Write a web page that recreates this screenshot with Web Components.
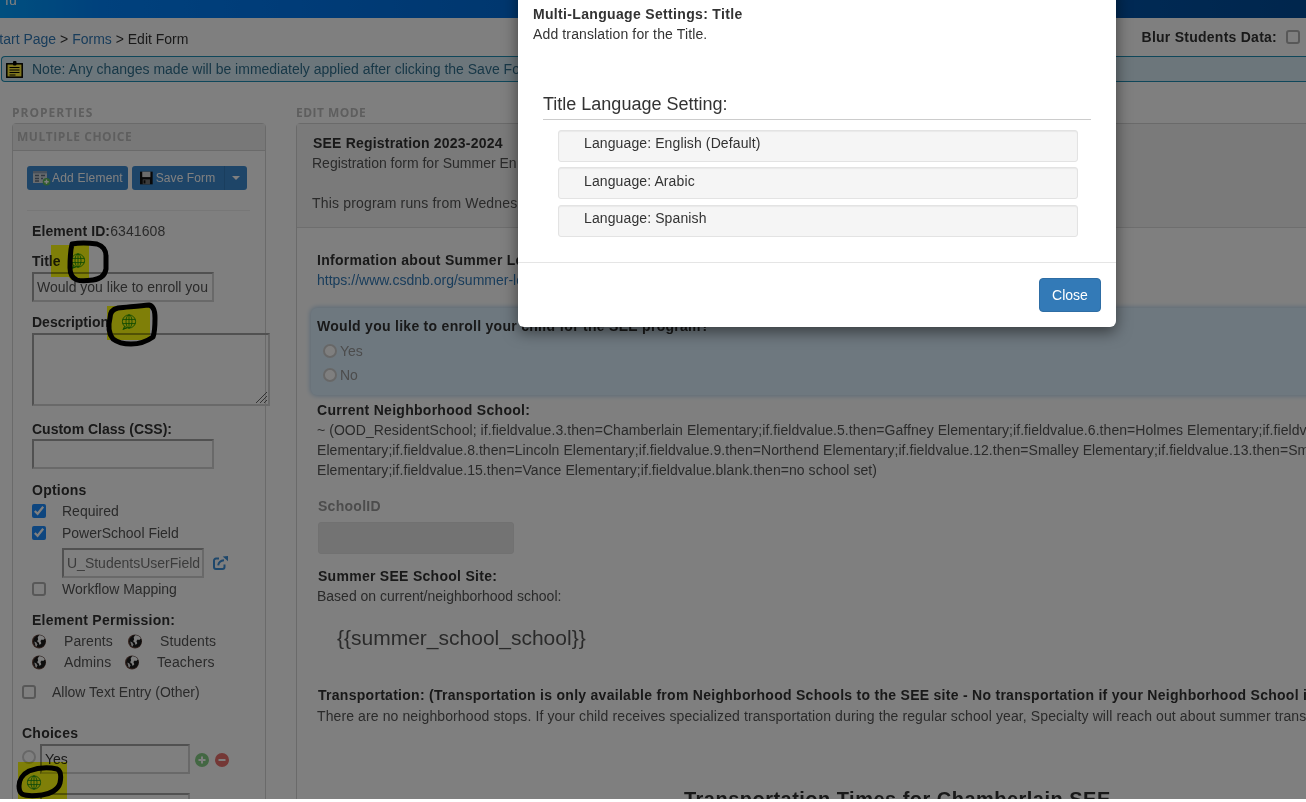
<!DOCTYPE html>
<html>
<head>
<meta charset="utf-8">
<title>Edit Form</title>
<style>
    html, body { margin: 0; padding: 0; background: #fff; height: 100%; overflow: hidden; }
    body { font: 14px/20px "Liberation Sans", Arial, sans-serif; color: #333; }
</style>
</head>
<body>
<page-frame></page-frame>

<script>
const icons = {
    globe: `<svg width="16" height="16" viewBox="0 0 16 16" fill="none" stroke="#149014" stroke-width=".85">
        <circle cx="8" cy="7.5" r="6.6"/><ellipse cx="8" cy="7.5" rx="3" ry="6.6"/>
        <path d="M1.700 5.400h12.600M1.700 9.600h12.600M8 .9v13.200"/><path d="M3.600 12.400L2.400 15.200l3.600-1.400" stroke-width="1.100"/></svg>`,
    world: `<svg width="14" height="15" viewBox="0 0 14 15">
        <circle cx="7" cy="7.500" r="7" fill="#6b4a40"/><circle cx="7.400" cy="7.300" r="6.200" fill="#1c1c1c"/>
        <path d="M7 1.400c2.600-.3 5 1.100 5.800 3.200l-1.600 1.400-1.500-.6-1.300 1.600.9 2.300-1.600 1.800-1-2.700-1.600-1.100 1-1.700L5.700 3.200z" fill="#fff"/>
        <path d="M2.300 7.600l1.900.6 1.100 2.100-.6 2.400-1.400-1.500z" fill="#ddd"/></svg>`,
    note: `<svg width="17" height="17" viewBox="0 0 17 17">
        <rect x=".8" y="2.800" width="15.400" height="13.400" fill="#ffec3d" stroke="#000" stroke-width="1.500"/>
        <path d="M3.500 6.500h10M3.500 9h10M3.500 11.500h10M3.500 14h6" stroke="#000"/><rect x="7" y="0" width="3.500" height="4.500" rx="1" fill="#000"/></svg>`,
    add: `<svg width="18" height="16" viewBox="0 0 18 16">
        <rect x="0" y="1" width="14" height="12" fill="#cfd6dd"/><rect x="0" y="1" width="14" height="2.400" fill="#8ea0b4"/>
        <path d="M2 5.500h4M8 5.500h4M2 8.500h4M8 8.500h2M2 11h4" stroke="#5f6f80" stroke-width="1.400"/>
        <circle cx="13.500" cy="11.800" r="3.800" fill="#5cb85c"/><path d="M13.500 9.600v4.400M11.300 11.800h4.400" stroke="#fff" stroke-width="1.400"/></svg>`,
    save: `<svg width="14" height="14" viewBox="0 0 14 14">
        <path d="M0 0h14v14H0z" fill="#111"/><rect x="2.500" y="0" width="9" height="6" fill="#d8d8d8"/>
        <rect x="3" y="8.500" width="8" height="5.500" fill="#777"/><rect x="4" y="9.500" width="2" height="3.500" fill="#111"/></svg>`,
    open: `<svg width="15" height="14" viewBox="0 0 15 14" fill="none" stroke="#3d8fd6">
        <path d="M6 2.600H3a2 2 0 0 0-2 2V11a2 2 0 0 0 2 2h6.500a2 2 0 0 0 2-2V8.400" stroke-width="2"/>
        <path d="M5.200 9.400c.5-3.400 2.800-5 5.800-5.200" stroke-width="2"/><path d="M9.700 .6L15 0v5.200z" fill="#3d8fd6" stroke="none"/></svg>`,
    plus: `<svg width="14" height="14" viewBox="0 0 14 14"><circle cx="7" cy="7" r="7" fill="#86cf86"/><path d="M7 3.500v7M3.500 7h7" stroke="#fff" stroke-width="2"/></svg>`,
    minus: `<svg width="14" height="14" viewBox="0 0 14 14"><circle cx="7" cy="7" r="7" fill="#e8706c"/><path d="M3.500 7h7" stroke="#fff" stroke-width="2"/></svg>`
};

// shared look of the unchecked boxes and the radios
const inputCss = `
    input[type=radio] { appearance: none; box-sizing: border-box; width: 14px; height: 14px; border: 2px solid #cfcfcf; border-radius: 50%; background: #fff; }
    input[type=checkbox]:not([checked]) { appearance: none; box-sizing: border-box; width: 14px; height: 14px; border: 2px solid #b0b0b0; border-radius: 3px; background: #fff; }
`;

class TopBar extends HTMLElement {
    constructor() {
        super();
        this.attachShadow({mode: 'open'});
        this.shadowRoot.innerHTML = `
            <style>
                :host {
                    display: block;
                    height: 18px;
                    overflow: hidden;
                    background: linear-gradient(90deg, #009fff 0%, #0082fa 8%, #0078f0 23%, #0054aa 85%, #004c9a 100%);
                }
                span { display: block; margin: -10px 0 0 5px; color: #fff; font-size: 14px; }
            </style>
            <span>fu</span>
        `;
    }
}

class CrumbBar extends HTMLElement {
    constructor() {
        super();
        this.attachShadow({mode: 'open'});
        this.shadowRoot.innerHTML = `
            <style>
                ${inputCss}
                :host {
                    display: flex;
                    justify-content: space-between;
                    height: 38px;
                    box-sizing: border-box;
                    padding: 11px 6px 0 0;
                }
                a { color: #337ab7; text-decoration: none; }
                .trail { margin-left: -10px; }
                .blur { display: flex; align-items: flex-start; gap: 9px; margin-top: -2px; font-weight: bold; letter-spacing: .25px; }
                input { margin: 3px 0 0; }
            </style>
            <div class="trail"><a>Start Page</a> &gt; <a>Forms</a> &gt; Edit Form</div>
            <div class="blur">Blur Students Data: <input type="checkbox"></div>
        `;
    }
}

class NoteBar extends HTMLElement {
    constructor() {
        super();
        this.attachShadow({mode: 'open'});
        this.shadowRoot.innerHTML = `
            <style>
                :host {
                    display: flex;
                    align-items: center;
                    gap: 9px;
                    height: 24px;
                    margin-left: 1px;
                    padding-left: 4px;
                    border: 1px solid #1f8fb5;
                    border-right: 0;
                    border-radius: 4px 0 0 4px;
                    background: #d9edf7;
                    color: #31708f;
                    white-space: nowrap;
                }
                svg { display: block; }
            </style>
            ${icons.note}<span>Note: Any changes made will be immediately applied after clicking the Save Form</span>
        `;
    }
}

class FieldBox extends HTMLElement {
    constructor() {
        super();
        this.attachShadow({mode: 'open'});
        this.shadowRoot.innerHTML = `
            <style>
                :host {
                    display: block;
                    box-sizing: border-box;
                    height: 30px;
                    padding: 3px 3px;
                    line-height: 20px;
                    border: 2px solid;
                    border-color: #a2a2a2 #d2d2d2 #d2d2d2 #a2a2a2;
                    background: #fff;
                    overflow: hidden;
                    white-space: nowrap;
                    color: #555;
                }
            </style>
            <slot></slot>
        `;
    }
}

class TickRow extends HTMLElement {
    constructor() {
        super();
        this.attachShadow({mode: 'open'});
        const checked = this.hasAttribute('checked') ? 'checked' : '';
        this.shadowRoot.innerHTML = `
            <style>
                ${inputCss}
                :host { display: flex; align-items: center; gap: 16px; height: 20px; color: #555; }
                input { width: 14px; height: 14px; margin: 0; accent-color: #1c8cff; }
            </style>
            <input type="checkbox" ${checked}>
            <slot></slot>
        `;
    }
}

class PropsPanel extends HTMLElement {
    constructor() {
        super();
        this.attachShadow({mode: 'open'});
        this.shadowRoot.innerHTML = `
            <style>
                ${inputCss}
                :host {
                    display: block;
                    box-sizing: border-box;
                    width: 254px;
                    height: 700px;
                    border: 1px solid #d4d4d4;
                    border-radius: 4px 4px 0 0;
                    background: #fff;
                }
                header {
                    height: 26px;
                    padding-left: 4px;
                    border-bottom: 1px solid #d4d4d4;
                    background: #f1f1f1;
                    font: bold 12px/26px "Open Sans", sans-serif;
                    letter-spacing: .55px;
                    color: #bdbdbd;
                }
                .body { padding: 15px 0 0 14px; }
                .buttons { display: flex; gap: 4px; }
                .btn {
                    display: flex;
                    align-items: center;
                    height: 24px;
                    box-sizing: border-box;
                    border-radius: 3px;
                    background: #3c8ad0;
                    color: #fff;
                    font-size: 12px;
                    letter-spacing: .2px;
                    white-space: nowrap;
                }
                .btn svg { display: block; }
                .btn.add { width: 101px; gap: 1px; padding-left: 6px; }
                .btn.save { width: 115px; gap: 3px; padding-left: 8px; letter-spacing: .1px; }
                .caret { display: flex; align-items: center; justify-content: center; width: 25px; height: 24px; margin-left: 6px; border-left: 1px solid #347cbd; box-sizing: border-box; }
                .caret i { border: 4px solid transparent; border-top-color: #fff; border-bottom: 0; }
                hr { width: 223px; margin: 20px 0 0 0; border: 0; border-top: 1px solid #eee; }
                .col { margin: 10px 0 0 5px; }
                .lbl { display: block; font-weight: bold; line-height: 20px; }
                .id { color: #555; font-weight: normal; letter-spacing: .1px; }
                .inline { display: flex; align-items: center; }
                .inline svg { display: block; }
                field-box.w { width: 182px; margin-top: 1px; }
                .area { width: 238px; height: 73px; box-sizing: border-box; margin-top: 1px; border: 2px solid; border-color: #a2a2a2 #d2d2d2 #d2d2d2 #a2a2a2; position: relative; }
                .area svg { position: absolute; right: 0; bottom: 0; }
                .link { display: flex; align-items: center; gap: 9px; margin: 5px 0 1px 30px; }
                field-box.ps { width: 142px; color: #777; font-size: 14px; padding-right: 0; }
                .perm { display: grid; grid-template-columns: 14px 46px 14px auto; column-gap: 18px; align-items: center; height: 20px; margin-top: 1px; color: #555; }
                .perm.second { grid-template-columns: 14px 43px 14px auto; }
                .perm svg { display: block; }
                .perm span { letter-spacing: .1px; }
                .out { margin-left: -10px; }
                .choice { display: flex; align-items: flex-start; gap: 4px; margin-left: -10px; }
                .choice input { margin: 6px 0 0; flex: none; }
                .choice field-box { width: 150px; color: #333; }
                .tools { display: flex; gap: 6px; margin: 9px 0 0 1px; }
                .tools svg { display: block; }
                .spaced { letter-spacing: .25px; }
                .id-name { letter-spacing: .1px; }
            </style>
            <header>MULTIPLE CHOICE</header>
            <div class="body">
                <div class="buttons">
                    <div class="btn add">${icons.add}Add Element</div>
                    <div class="btn save">${icons.save}Save Form<span class="caret"><i></i></span></div>
                </div>
                <hr>
                <div class="col">
                    <div><strong class="id-name">Element ID:</strong><span class="id">6341608</span></div>
                    <div class="lbl inline" style="margin-top:10px;gap:9px">Title ${icons.globe}</div>
                    <field-box class="w">Would you like to enroll you</field-box>
                    <div class="lbl inline" style="margin-top:10px;gap:12px">Description ${icons.globe}</div>
                    <div class="area"><svg width="14" height="14" viewBox="0 0 14 14" stroke="#666"><path d="M2 13L13 2M6 13l7-7M10 13l3-3"/></svg></div>
                    <div class="lbl" style="margin-top:13px">Custom Class (CSS):</div>
                    <field-box class="w" style="margin-top:0"></field-box>
                    <div class="lbl spaced" style="margin-top:11px">Options</div>
                    <tick-row checked style="margin-top:1px">Required</tick-row>
                    <tick-row checked style="margin-top:2px">PowerSchool Field</tick-row>
                    <div class="link"><field-box class="ps">U_StudentsUserField</field-box>${icons.open}</div>
                    <tick-row>Workflow Mapping</tick-row>
                    <div class="lbl spaced" style="margin-top:11px">Element Permission:</div>
                    <div class="perm">${icons.world}<span>Parents</span>${icons.world}<span>Students</span></div>
                    <div class="perm second">${icons.world}<span>Admins</span>${icons.world}<span>Teachers</span></div>
                    <tick-row class="out" style="margin-top:10px">Allow Text Entry (Other)</tick-row>
                    <div class="lbl out spaced" style="margin-top:21px">Choices</div>
                    <div class="choice" style="margin-top:1px"><input type="radio"><field-box>Yes</field-box><div class="tools">${icons.plus}${icons.minus}</div></div>
                    <div class="choice" style="margin-top:19px"><input type="radio"><field-box></field-box></div>
                </div>
            </div>
        `;
    }
}

class RadioList extends HTMLElement {
    constructor() {
        super();
        this.attachShadow({mode: 'open'});
        this.shadowRoot.innerHTML = `
            <style>
                ${inputCss}
                :host { display: block; margin: 5px 0 0 6px; color: #999; }
                div { display: flex; align-items: center; gap: 3px; height: 20px; margin-bottom: 4px; }
                input { margin: 0; background: transparent; }
            </style>
            <div><input type="radio">Yes</div>
            <div><input type="radio">No</div>
        `;
    }
}

class FormCanvas extends HTMLElement {
    constructor() {
        super();
        this.attachShadow({mode: 'open'});
        this.shadowRoot.innerHTML = `
            <style>
                :host {
                    display: block;
                    box-sizing: border-box;
                    width: 1100px;
                    height: 700px;
                    border: 1px solid #d4d4d4;
                    border-radius: 4px 4px 0 0;
                    background: #fff;
                    white-space: nowrap;
                    color: #555;
                }
                header {
                    height: 104px;
                    box-sizing: border-box;
                    padding: 9px 0 0 15px;
                    border-bottom: 1px solid #ddd;
                    background: #f5f5f5;
                }
                b { display: block; color: #333; letter-spacing: .28px; }
                header b { margin-left: 1px; letter-spacing: .2px; }
                .wide { letter-spacing: .17px; }
                .body { padding: 22px 0 0 20px; }
                a { color: #337ab7; }
                .focus {
                    margin: 18px 0 0 -6px;
                    height: 87px;
                    box-sizing: border-box;
                    padding: 8px 6px;
                    border-radius: 6px;
                    background: #dcf0ff;
                    box-shadow: 0 0 5px 1px #b4d4ee;
                }
                .gap5 { margin-top: 5px; }
                .lines { letter-spacing: .06px; }
                .muted { color: #999; margin: 16px 0 0 1px; }
                .off { width: 196px; height: 32px; margin: 6px 0 0 1px; border-radius: 3px; background: #e7e7e7; border: 1px solid #e2e2e2; box-sizing: border-box; }
                .site { margin: 18px 0 0 20px; font-size: 21px; line-height: 28px; }
                .stops { margin-top: 1px; letter-spacing: .11px; }
                h2 { margin: 61px 0 0; padding-left: 367px; font-size: 20px; line-height: 24px; color: #333; letter-spacing: .48px; }
            </style>
            <header>
                <b>SEE Registration 2023-2024</b>
                Registration form for Summer En<br><br>
                <span class="wide">This program runs from Wednes</span>
            </header>
            <div class="body">
                <b>Information about Summer Le</b>
                <a>https://www.csdnb.org/summer-le</a>
                <div class="focus">
                    <b>Would you like to enroll your child for the SEE program?</b>
                    <radio-list></radio-list>
                </div>
                <b class="gap5">Current Neighborhood School:</b>
                <div class="lines">
                ~ (OOD_ResidentSchool; if.fieldvalue.3.then=Chamberlain Elementary;if.fieldvalue.5.then=Gaffney Elementary;if.fieldvalue.6.then=Holmes Elementary;if.fieldv<br>
                Elementary;if.fieldvalue.8.then=Lincoln Elementary;if.fieldvalue.9.then=Northend Elementary;if.fieldvalue.12.then=Smalley Elementary;if.fieldvalue.13.then=Sm<br>
                Elementary;if.fieldvalue.15.then=Vance Elementary;if.fieldvalue.blank.then=no school set)
                </div>
                <b class="muted">SchoolID</b>
                <div class="off"></div>
                <b style="margin:12px 0 0 1px">Summer SEE School Site:</b>
                Based on current/neighborhood school:
                <div class="site">{{summer_school_school}}</div>
                <b style="margin-top:33px;margin-left:1px">Transportation: (Transportation is only available from Neighborhood Schools to the SEE site - No transportation if your Neighborhood School i</b>
                <div class="stops">There are no neighborhood stops. If your child receives specialized transportation during the regular school year, Specialty will reach out about summer trans</div>
                <h2>Transportation Times for Chamberlain SEE</h2>
            </div>
        `;
    }
}

class WorkArea extends HTMLElement {
    constructor() {
        super();
        this.attachShadow({mode: 'open'});
        this.shadowRoot.innerHTML = `
            <style>
                :host {
                    display: grid;
                    grid-template-columns: 254px auto;
                    column-gap: 30px;
                    margin-top: 19px;
                    padding-left: 12px;
                }
                h4 {
                    margin: 0;
                    height: 22px;
                    font: bold 12px/24px "Open Sans", sans-serif;
                    letter-spacing: 1px;
                    color: #bdbdbd;
                }
                h4.edit { letter-spacing: .45px; }
            </style>
            <section><h4>PROPERTIES</h4><props-panel></props-panel></section>
            <section><h4 class="edit">EDIT MODE</h4><form-canvas></form-canvas></section>
        `;
    }
}

// highlighter patches and pen scribbles someone drew over the screenshot
class InkLayer extends HTMLElement {
    constructor() {
        super();
        this.attachShadow({mode: 'open'});
        this.shadowRoot.innerHTML = `
            <style>
                :host { position: absolute; inset: 0; pointer-events: none; }
                svg { display: block; position: absolute; left: 0; top: 0; }
                .pen { fill: none; stroke: #000; stroke-width: 5; stroke-linecap: round; stroke-linejoin: round; }
                .yel { fill: #ffff10; mix-blend-mode: multiply; }
            </style>
            <svg width="1306" height="802">
                <path class="yel" d="M51 245h38v35H71l-2-3H51z"/>
                <path class="yel" d="M107 306h43v34h-43z"/>
                <path class="yel" d="M18 762h49v40H18z"/>
            </svg>
            <svg width="1306" height="802" fill="none" stroke="#149014" stroke-width=".85">
                <g transform="translate(26 775)">
                    <circle cx="8" cy="7.500" r="6.600"/><ellipse cx="8" cy="7.500" rx="3" ry="6.600"/>
                    <path d="M1.700 5.400h12.600M1.700 9.600h12.600M8 .9v13.200"/>
                </g>
            </svg>
            <svg width="1306" height="802">
                <path class="pen" d="M72 244C82 242 90 243 97 244C103 246 106 250 106 256V269C105 275 100 279 93 280C86 281 80 281 77 280C72 278 70 274 70 268C70 260 70 252 72 244Z"/>
                <path class="pen" d="M110 318C110 312 113 309 118 308C128 307 140 306 149 305C154 306 155 311 155 318C155 325 155 332 153 337C146 342 139 344 131 344C123 344 117 342 113 339C109 334 108 326 110 318Z"/>
                <path class="pen" d="M19 786C19 780 23 774 29 771C37 768 48 767 57 769C61 771 61 778 60 783C58 790 50 794 42 795C34 796 26 796 22 794C19 792 19 789 19 786Z"/>
            </svg>
        `;
    }
}

class LangItem extends HTMLElement {
    constructor() {
        super();
        this.attachShadow({mode: 'open'});
        this.shadowRoot.innerHTML = `
            <style>
                :host {
                    display: block;
                    box-sizing: border-box;
                    height: 32px;
                    padding: 2px 25px;
                    border: 1px solid #e3e3e3;
                    border-radius: 3px;
                    background: #f5f5f5;
                    box-shadow: inset 0 1px 1px rgba(0,0,0,.05);
                    line-height: 20px;
                    letter-spacing: .11px;
                }
            </style>
            <slot></slot>
        `;
    }
}

class LangModal extends HTMLElement {
    constructor() {
        super();
        this.attachShadow({mode: 'open'});
        this.shadowRoot.innerHTML = `
            <style>
                :host {
                    position: absolute;
                    top: -20px;
                    left: 518px;
                    width: 598px;
                    height: 347px;
                    box-sizing: border-box;
                    border-radius: 6px;
                    background: #fff;
                    box-shadow: 0 5px 15px rgba(0,0,0,.5);
                    color: #333;
                }
                .head { padding: 24px 15px 0; letter-spacing: .13px; }
                .head b { display: block; letter-spacing: .33px; }
                h3 { margin: 0; font-weight: normal; font-size: 18px; line-height: 20px; }
                .setting { margin: 50px 25px 0; padding-bottom: 5px; border-bottom: 1px solid #ccc; }
                .list { display: flex; flex-direction: column; gap: 5px; margin: 10px 38px 0 40px; }
                .list lang-item:nth-child(2) { padding-top: 3px; }
                .list lang-item:nth-child(3) { margin-top: 1px; }
                footer { display: flex; justify-content: flex-end; margin-top: 25px; padding: 15px; border-top: 1px solid #e5e5e5; }
                .close {
                    height: 34px;
                    width: 62px;
                    box-sizing: border-box;
                    border: 1px solid #2e6da4;
                    border-radius: 4px;
                    background: #337ab7;
                    color: #fff;
                    text-align: center;
                    line-height: 32px;
                }
            </style>
            <div class="head">
                <b>Multi-Language Settings: Title</b>
                Add translation for the Title.
            </div>
            <div class="setting"><h3>Title Language Setting:</h3></div>
            <div class="list">
                <lang-item>Language: English (Default)</lang-item>
                <lang-item>Language: Arabic</lang-item>
                <lang-item>Language: Spanish</lang-item>
            </div>
            <footer><div class="close">Close</div></footer>
        `;
    }
}

class PageFrame extends HTMLElement {
    constructor() {
        super();
        this.attachShadow({mode: 'open'});
        this.shadowRoot.innerHTML = `
            <style>
                :host {
                    display: block;
                    position: relative;
                    height: 799px;
                    overflow: hidden;
                    background: #fff;
                }
                .backdrop { position: absolute; inset: 0; background: rgba(0,0,0,.5); }
            </style>
            <top-bar></top-bar>
            <crumb-bar></crumb-bar>
            <note-bar></note-bar>
            <work-area></work-area>
            <ink-layer></ink-layer>
            <div class="backdrop"></div>
            <lang-modal></lang-modal>
        `;
    }
}

customElements.define('top-bar', TopBar);
customElements.define('crumb-bar', CrumbBar);
customElements.define('note-bar', NoteBar);
customElements.define('field-box', FieldBox);
customElements.define('tick-row', TickRow);
customElements.define('props-panel', PropsPanel);
customElements.define('radio-list', RadioList);
customElements.define('form-canvas', FormCanvas);
customElements.define('work-area', WorkArea);
customElements.define('ink-layer', InkLayer);
customElements.define('lang-item', LangItem);
customElements.define('lang-modal', LangModal);
customElements.define('page-frame', PageFrame);
</script>
</body>
</html>
